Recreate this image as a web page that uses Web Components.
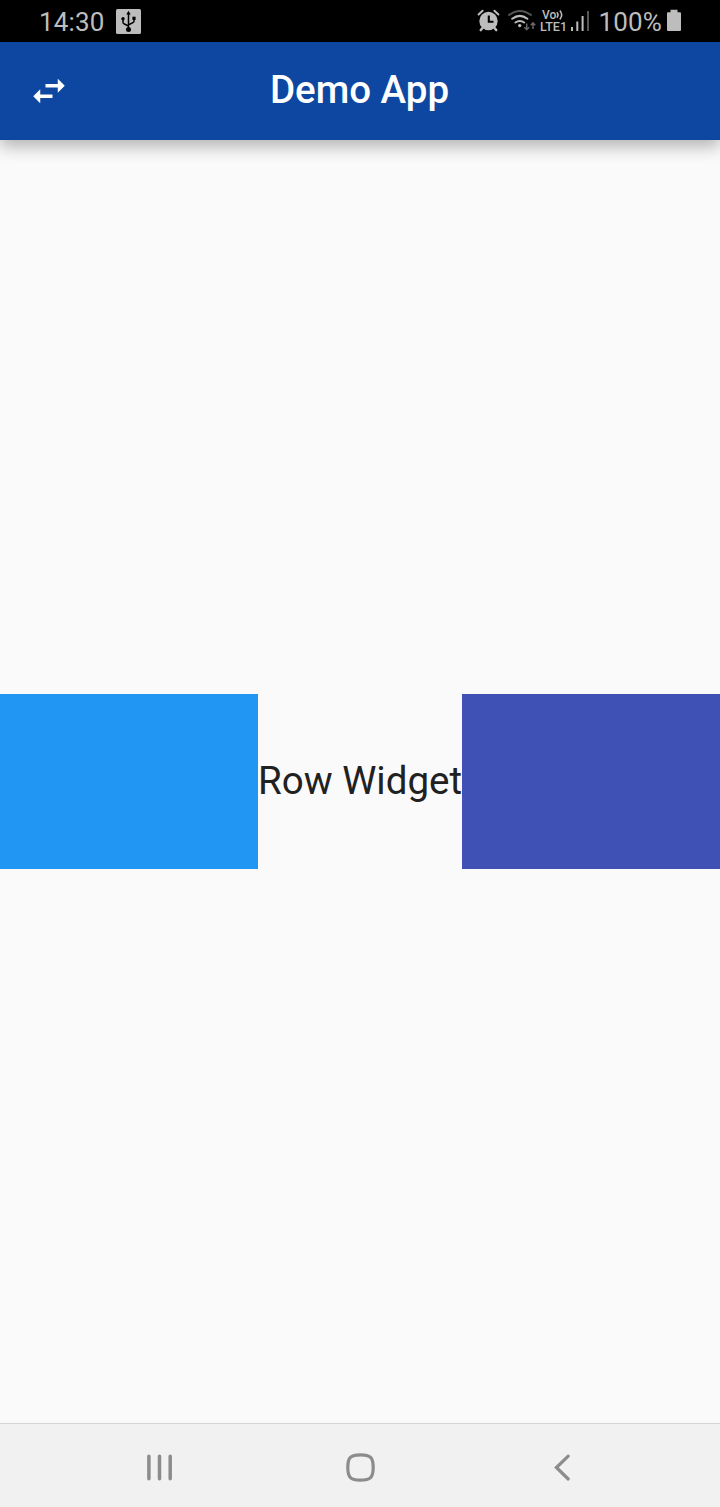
<!DOCTYPE html>
<html lang="en"><head><meta charset="utf-8"><title>Demo App</title>
<style>html,body{margin:0;height:100%}body{font-family:Roboto,sans-serif;background:#fafafa;overflow:hidden}</style></head>
<body><demo-screen></demo-screen>
<script>
function define(name, markup) {
  const t = document.createElement('template');
  t.innerHTML = markup;
  customElements.define(name, class extends HTMLElement {
    constructor() { super(); this.attachShadow({mode: 'open'}).append(t.content.cloneNode(true)); }
  });
}
define('status-bar', `<style>
:host{display:flex;height:42px;box-sizing:border-box;background:#000;color:#bdbdbd;font-size:26px;line-height:45px;padding:0 38px 0 39px;align-items:flex-start}
svg{display:block;flex:none}.time{width:77px;letter-spacing:.15px}.grow{flex:1}
.net{display:grid;grid-template-rows:11px 11px;width:28px;padding-top:10px;font-weight:500;font-size:12.500px;line-height:12px;margin-left:3px}
.net b{font-weight:500;white-space:nowrap}.net b:first-child{font-size:12px;line-height:10px;display:flex;padding-left:2px;height:11px}
.pct{margin-left:9.500px;width:67.500px;letter-spacing:.15px}
</style><span class="time">14:30</span>
<svg width="25" height="42" viewBox="116 0 25 42"><rect x="116" y="9" width="25" height="25" rx="1.5" fill="#bdbdbd"/><g fill="none" stroke="#000" stroke-width="1.5"><path d="M128.500 28V13M123 19v3.200q0 1.300 1.400 1.800l4.100 2M134 18v3q0 1.300-1.400 1.800l-4.100 2"/></g><path d="M128.500 10.800l2.200 3.600h-4.400z"/><circle cx="128.500" cy="29.500" r="2.500"/><circle cx="123" cy="18.800" r="1.700"/><rect x="132.400" y="16.700" width="3.200" height="3.200"/></svg>
<span class="grow"></span>
<svg width="24" height="42" viewBox="477 0 24 42"><g fill="none" stroke="#bdbdbd" stroke-linecap="round"><path stroke-width="2" d="M478.600 14.500l4-3.700M498.400 14.500l-4-3.700"/><path stroke-width="2.600" d="M482.500 28l-1.700 2M494.500 28l1.700 2"/></g><circle cx="488.500" cy="21" r="9.200" fill="#bdbdbd"/><path d="M488.800 15.500v6.300h4.700" fill="none" stroke="#000" stroke-width="2.1"/></svg>
<svg width="36" height="42" viewBox="501 0 36 42"><g fill="none" stroke-width="2" stroke-linecap="round"><path stroke="#555" d="M509 15q11-8.200 22 0"/><path stroke="#bdbdbd" d="M512.200 18.800q7.600-5.800 15.200 0M515.400 22.500q4.400-3.200 8.800 0"/></g><circle cx="519.700" cy="25.600" r="1.700" fill="#bdbdbd"/><g fill="none" stroke="#666" stroke-width="1.500"><path d="M526.700 23.500v6M524.400 27.200l2.300 2.400 2.300-2.400M533 29v-6M530.700 25.300l2.300-2.400 2.300 2.400"/></g></svg>
<div class="net"><b>Vo<svg width="10" height="11" fill="none" stroke="#bdbdbd" stroke-width="1.500"><path d="M.8 2.300q2.400 2.700 0 5.400M3.800.6q3.800 4.400 0 8.800"/></svg></b><b>LTE1</b></div>
<svg width="21" height="42" viewBox="568 0 21 42"><path stroke="#bdbdbd" stroke-width="2" d="M572 27v4M577.300 21.500V31M582.600 16v15"/><path stroke="#555" stroke-width="2" d="M588 11v20"/></svg>
<span class="pct">100%</span>
<svg width="16" height="42" viewBox="666 0 16 42"><path fill="#bdbdbd" d="M670.500 9.800h7v2.400h2.500q1 0 1 1V30q0 1-1 1h-12q-1 0-1-1V13.200q0-1 1-1h2.500z"/></svg>`);
define('app-bar', `<style>
:host{display:grid;grid-template-columns:98px 1fr 98px;height:98px;align-items:center;background:#0d47a1;color:#fff;box-shadow:0 6px 16px #0000004d;position:relative}
svg{display:block;justify-self:center}h1{margin:0;font-size:38.500px;font-weight:500;line-height:45px;text-align:center;padding:0 1px 4px 0}
</style><svg width="42" height="42" viewBox="0 0 24 24" fill="#fff"><path d="M6.990 11L3 15l3.990 4v-3H14v-2H6.990v-3zM21 9l-3.990-4v3H10v2h7.010v3L21 9z"/></svg><h1><slot></slot></h1>`);
define('row-widget', `<style>
:host{display:flex;height:175px;align-items:center;color:#212121;font-size:38.500px;line-height:45px}
i{flex:1;align-self:stretch;background:#2196f3}i:last-child{background:#3f51b5}span{white-space:nowrap;padding-bottom:2px}
</style><i></i><span><slot></slot></span><i></i>`);
define('nav-bar', `<style>
:host{display:flex;height:84px;box-sizing:border-box;border-top:1px solid #d4d4d4;background:#f1f1f1;justify-content:center;align-items:center;gap:161px;padding-top:5px}
svg{display:block;overflow:visible;fill:none;stroke:#8c8c8c;stroke-width:3.500;stroke-linecap:round}
</style><svg width="40" height="40"><path d="M9.900 8.200v22.600M20.500 8.200v22.600M31.200 8.200v22.600"/></svg>
<svg width="40" height="40"><path stroke-width="3.200" d="M20.500 6.800C30.500 6.800 33.200 9.500 33.200 19.500S30.500 32.200 20.500 32.200 7.800 29.500 7.800 19.500 10.500 6.800 20.500 6.800z"/></svg>
<svg width="40" height="40"><path stroke-width="3.200" d="M27.200 8.100L15.400 19.500l11.800 11.500"/></svg>`);
define('demo-screen', `<style>
:host{display:flex;flex-direction:column;height:1507px;width:720px}main{flex:1;display:flex;flex-direction:column;justify-content:center}
</style><status-bar></status-bar><app-bar>Demo App</app-bar><main><row-widget>Row Widget</row-widget></main><nav-bar></nav-bar>`);
</script></body></html>
